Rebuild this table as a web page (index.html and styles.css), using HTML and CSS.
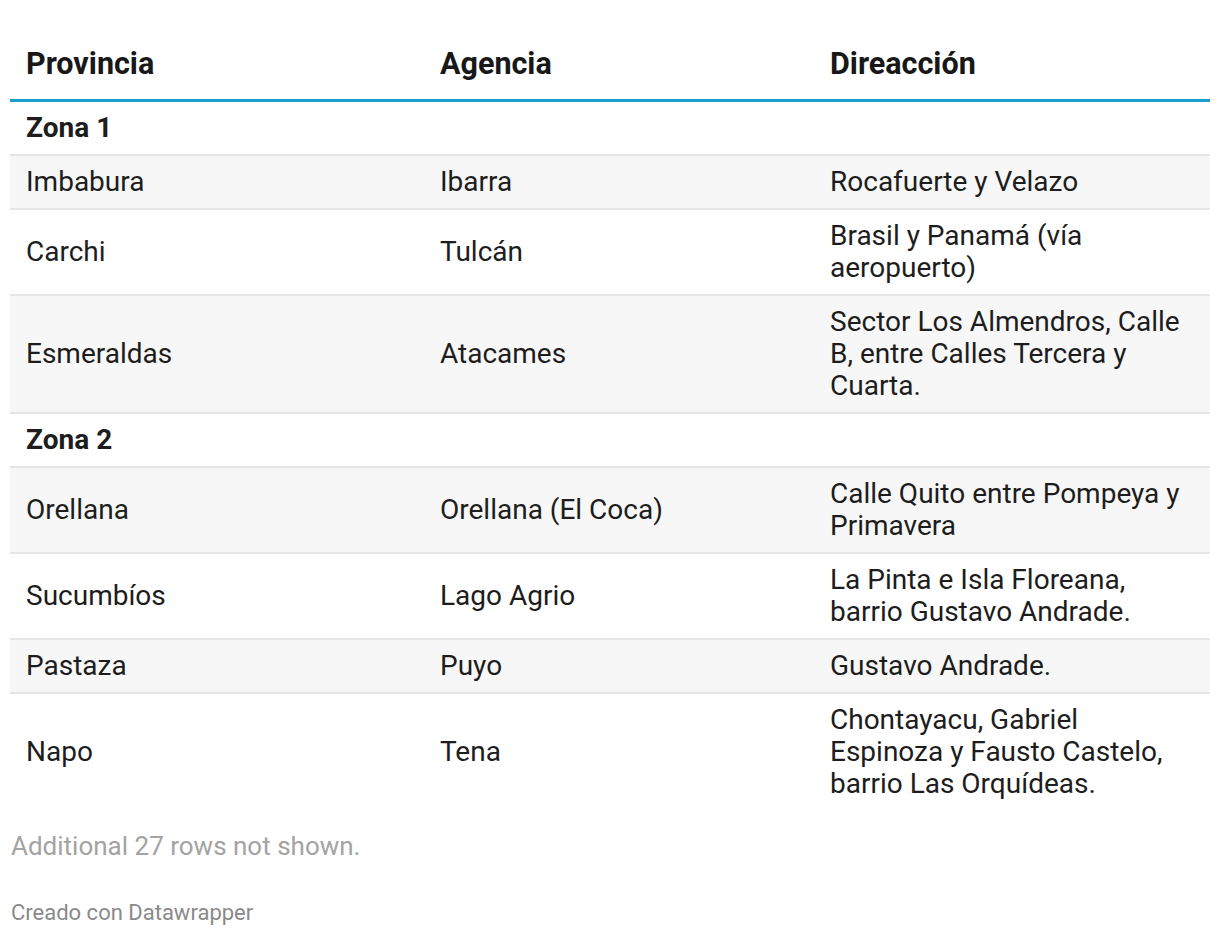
FILE: index.html
```html
<!DOCTYPE html>
<html lang="es">
<head>
<meta charset="utf-8">
<title>Agencias</title>
<link rel="stylesheet" href="styles.css">
</head>
<body>
<div class="chart">
  <table class="tbl">
    <colgroup>
      <col class="c1"><col class="c2"><col class="c3">
    </colgroup>
    <thead>
      <tr><th>Provincia</th><th>Agencia</th><th>Direacción</th></tr>
    </thead>
    <tbody>
      <tr class="group"><td colspan="3">Zona 1</td></tr>
      <tr class="row odd"><td>Imbabura</td><td>Ibarra</td><td>Rocafuerte y Velazo</td></tr>
      <tr class="row"><td>Carchi</td><td>Tulcán</td><td>Brasil y Panamá (vía aeropuerto)</td></tr>
      <tr class="row odd"><td>Esmeraldas</td><td>Atacames</td><td>Sector Los Almendros, Calle B, entre Calles Tercera y Cuarta.</td></tr>
      <tr class="group"><td colspan="3">Zona 2</td></tr>
      <tr class="row odd"><td>Orellana</td><td>Orellana (El Coca)</td><td>Calle Quito entre Pompeya y Primavera</td></tr>
      <tr class="row"><td>Sucumbíos</td><td>Lago Agrio</td><td>La Pinta e Isla Floreana, barrio Gustavo Andrade.</td></tr>
      <tr class="row odd"><td>Pastaza</td><td>Puyo</td><td>Gustavo Andrade.</td></tr>
      <tr class="row last"><td>Napo</td><td>Tena</td><td>Chontayacu, Gabriel Espinoza y Fausto Castelo, barrio Las Orquídeas.</td></tr>
    </tbody>
  </table>
  <p class="more">Additional 27 rows not shown.</p>
  <p class="credit">Creado con Datawrapper</p>
</div>
</body>
</html>
```
FILE: styles.css
```css
html, body {
  margin: 0;
  padding: 0;
  background: #ffffff;
}
body {
  font-family: Roboto, "Noto Sans", sans-serif;
  color: #1d1d1d;
}
.chart {
  padding: 10px 10px 0 10px;
}
.tbl {
  width: 1200px;
  border-collapse: collapse;
  table-layout: fixed;
  font-size: 28px;
  line-height: 32px;
}
.c1 { width: 414px; }
.c2 { width: 390px; }
.c3 { width: 396px; }
.tbl th {
  text-align: left;
  font-weight: 700;
  font-size: 30.5px;
  color: #181818;
  padding: 38px 15px 19px 16px;
  border-bottom: 3px solid #1d9fcb;
  vertical-align: bottom;
}
.tbl td {
  padding: 10px 15px 10px 16px;
  vertical-align: middle;
}
.group td {
  font-weight: 700;
  background: #ffffff;
  border-bottom: 2px solid #e6e6e6;
}
.row td {
  background: #ffffff;
  border-bottom: 2px solid #e6e6e6;
}
.row.odd td {
  background: #f7f7f7;
}
.row.last td {
  border-bottom: none;
}
.more {
  margin: 20px 0 0 1px;
  font-size: 26px;
  line-height: 32px;
  color: #a3a3a3;
}
.credit {
  margin: 38px 0 0 1px;
  font-size: 22px;
  line-height: 26px;
  color: #8a8a8a;
}
```
